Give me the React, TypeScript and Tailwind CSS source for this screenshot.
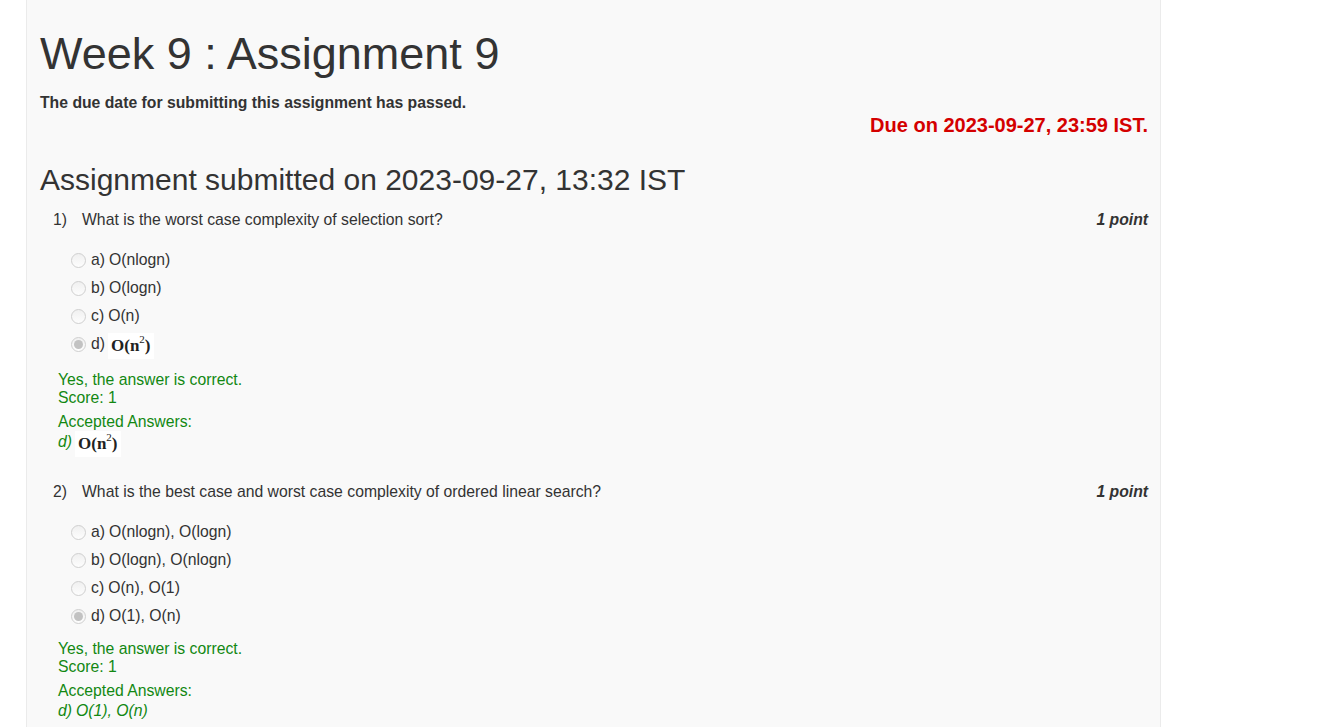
type Option = { key: string; text: string; math?: boolean };

type Question = {
  num: number;
  prompt: string;
  options: Option[];
  selected: string;
  accepted: { key: string; text: string; math?: boolean };
};

const questions: Question[] = [
  {
    num: 1,
    prompt: "What is the worst case complexity of selection sort?",
    options: [
      { key: "a", text: "O(nlogn)" },
      { key: "b", text: "O(logn)" },
      { key: "c", text: "O(n)" },
      { key: "d", text: "O(n2)", math: true },
    ],
    selected: "d",
    accepted: { key: "d", text: "O(n2)", math: true },
  },
  {
    num: 2,
    prompt: "What is the best case and worst case complexity of ordered linear search?",
    options: [
      { key: "a", text: "O(nlogn), O(logn)" },
      { key: "b", text: "O(logn), O(nlogn)" },
      { key: "c", text: "O(n), O(1)" },
      { key: "d", text: "O(1), O(n)" },
    ],
    selected: "d",
    accepted: { key: "d", text: "O(1), O(n)" },
  },
];

// the original page shows O(n²) as a small white image with serif type
function MathBox() {
  return (
    <span className="inline-flex items-center bg-white h-[26px] px-[3px] ml-[3px] not-italic font-['Liberation_Serif',serif] font-bold text-[17px] text-[#222] translate-y-[2px]">
      O(n<sup className="text-[11px] font-normal -top-[0.6em]">2</sup>)
    </span>
  );
}

function Radio({ checked }: { checked: boolean }) {
  return (
    <span className="w-[15px] h-[15px] rounded-full border border-[#cfcfcf] bg-gradient-to-b from-[#f0f0f0] to-[#fdfdfd] flex items-center justify-center shrink-0">
      {checked && <span className="w-[9px] h-[9px] rounded-full bg-[#c2c2c2]" />}
    </span>
  );
}

function QuestionBlock({ q }: { q: Question }) {
  return (
    <div>
      <div className="flex justify-between items-start leading-[22px]">
        <div className="flex pl-[13px]">
          <span className="w-[29px]">{q.num})</span>
          <span>{q.prompt}</span>
        </div>
        <span className="font-bold italic">1 point</span>
      </div>

      <div className="mt-[15px] pl-[31px]">
        {q.options.map((o) => (
          <div key={o.key} className={o.math ? "flex items-center h-[31px] pb-[3px]" : "flex items-center h-[28px]"}>
            <Radio checked={q.selected === o.key} />
            <span className="ml-[5px] flex items-center">
              {o.key}){o.math ? <MathBox /> : <span className="ml-[4px]">{o.text}</span>}
            </span>
          </div>
        ))}
      </div>

      <div className="mt-[10px] pl-[18px] text-[#128812] leading-[17.5px]">
        <div>Yes, the answer is correct.</div>
        <div>Score: 1</div>
        <div className="mt-[6.5px]">Accepted Answers:</div>
        <div className="italic flex items-center h-[23px]">
          {q.accepted.key})
          {q.accepted.math ? <MathBox /> : <span className="ml-[4px]">{q.accepted.text}</span>}
        </div>
      </div>
    </div>
  );
}

export default function App() {
  return (
    <div className="min-h-screen bg-white font-['Liberation_Sans',Arial,sans-serif] text-[#333] text-[15.75px]">
      <div className="ml-[26px] w-[1135px] min-h-[727px] bg-[#f9f9f9] border-x border-[#ebebeb] pl-[13px] pr-[12px] pt-[30px]">
        <h1 className="text-[45px] leading-[48px]">Week 9 : Assignment 9</h1>
        <p className="mt-[15px] font-bold leading-[20px]">The due date for submitting this assignment has passed.</p>
        <p className="text-right font-bold text-[20px] leading-[24px] text-[#d40000]">
          Due on 2023-09-27, 23:59 IST.
        </p>

        <h2 className="mt-[26px] text-[30px] leading-[33px]">Assignment submitted on 2023-09-27, 13:32 IST</h2>

        <div className="mt-[13px] flex flex-col gap-[28px]">
          {questions.map((q) => (
            <QuestionBlock key={q.num} q={q} />
          ))}
        </div>
      </div>
    </div>
  );
}
